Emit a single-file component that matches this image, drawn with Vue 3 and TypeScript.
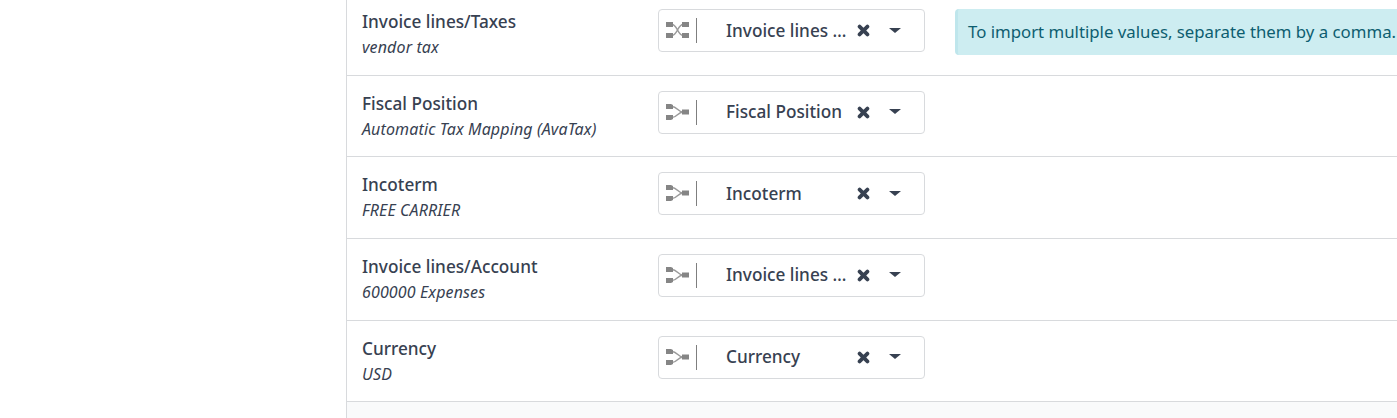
<script setup lang="ts">
type Row = {
  name: string;
  sample: string;
  field: string;
  hint?: string;
  icon: "many" | "one";
};

const rows: Row[] = [
  {
    name: "Invoice lines/Taxes",
    sample: "vendor tax",
    field: "Invoice lines / Taxes",
    icon: "many",
    hint: "To import multiple values, separate them by a comma.",
  },
  { name: "Fiscal Position", sample: "Automatic Tax Mapping (AvaTax)", field: "Fiscal Position", icon: "one" },
  { name: "Incoterm", sample: "FREE CARRIER", field: "Incoterm", icon: "one" },
  { name: "Invoice lines/Account", sample: "600000 Expenses", field: "Invoice lines / Account", icon: "one" },
  { name: "Currency", sample: "USD", field: "Currency", icon: "one" },
];
</script>

<template>
  <div class="page">
    <div class="sidebar" />
    <div class="content">
      <div class="rows">
        <div v-for="row in rows" :key="row.name" class="row">
          <div class="label">
            <div class="name">{{ row.name }}</div>
            <div class="sample">{{ row.sample }}</div>
          </div>
          <div class="select">
            <svg class="rel" width="23" height="16" viewBox="0 0 23 16">
              <g v-if="row.icon === 'many'">
                <path d="M6 2.5 C11 2.5 12 13.5 17 13.5 M6 13.5 C11 13.5 12 2.5 17 2.5" fill="none" stroke="#9a9a9a" stroke-width="1.5" />
                <rect x="0" y="0" width="7" height="5" fill="#858585" />
                <rect x="0" y="11" width="7" height="5" fill="#858585" />
                <rect x="16" y="0" width="7" height="5" fill="#858585" />
                <rect x="16" y="11" width="7" height="5" fill="#858585" />
              </g>
              <g v-else>
                <path d="M6 2.5 C11 2.5 12 8 17 8 M6 13.5 C11 13.5 12 8 17 8" fill="none" stroke="#9a9a9a" stroke-width="1.5" />
                <path d="M0 0 H5 L7 1 V5 H0 Z" fill="#858585" />
                <path d="M0 11 H7 V15 L5 16 H0 Z" fill="#858585" />
                <rect x="16" y="5.5" width="7" height="5" fill="#858585" />
              </g>
            </svg>
            <span class="sep" />
            <span class="value">{{ row.field }}</span>
            <svg class="clear" width="13" height="13" viewBox="0 0 13 13">
              <path d="M2.6 2.6 L10.4 10.4 M10.4 2.6 L2.6 10.4" stroke="#374151" stroke-width="3.8" stroke-linecap="round" />
            </svg>
            <span class="caret" />
          </div>
          <div v-if="row.hint" class="hint">{{ row.hint }}</div>
        </div>
      </div>
    </div>
  </div>
</template>

<style>
html,
body {
  margin: 0;
  background: #fff;
  overflow: hidden;
}
</style>

<style scoped>
.page {
  display: flex;
  height: 418px;
  overflow: hidden;
  font-family: "Noto Sans", sans-serif;
  color: #374151;
}
.sidebar {
  width: 346px;
  flex: none;
  background: #fff;
}
.content {
  flex: 1;
  min-width: 0;
  border-left: 1px solid #d8dadd;
  background: #f9fafb;
  overflow: hidden;
}
.rows {
  margin-top: -6px;
  background: #fff;
}
.row {
  box-sizing: border-box;
  height: 81.67px;
  padding: 15px 0 0 15px;
  border-bottom: 1px solid #d8dadd;
  display: flex;
  align-items: flex-start;
}
.label {
  width: 296px;
  flex: none;
}
.name {
  font-size: 17.2px;
  line-height: 26px;
  font-weight: 500;
}
.sample {
  font-size: 16px;
  letter-spacing: 0.13px;
  line-height: 24px;
  font-style: italic;
}
.select {
  box-sizing: border-box;
  width: 267px;
  height: 43px;
  flex: none;
  display: flex;
  align-items: center;
  border: 1px solid #d8dadd;
  border-radius: 4px;
  padding-left: 7px;
}
.rel {
  flex: none;
  margin-bottom: 1px;
}
.sep {
  width: 1px;
  height: 25px;
  margin: 0 29px 0 7px;
  background: #7f7f7f;
  flex: none;
}
.value {
  width: 122px;
  flex: none;
  font-size: 17.2px;
  font-weight: 500;
  line-height: 24px;
  white-space: nowrap;
  overflow: hidden;
  text-overflow: ellipsis;
}
.clear {
  flex: none;
  margin-left: 9px;
}
.caret {
  flex: none;
  margin-left: 19px;
  margin-bottom: 1px;
  border-left: 6px solid transparent;
  border-right: 6px solid transparent;
  border-top: 5px solid #374151;
}
.hint {
  box-sizing: border-box;
  flex: none;
  margin-left: 30px;
  height: 46px;
  padding: 0 12px 0 10px;
  line-height: 46px;
  font-size: 16.8px;
  white-space: nowrap;
  background: #cdedf1;
  color: #0d5e70;
  border-left: 3px solid #bfe6ec;
  border-radius: 4px 0 0 4px;
}
</style>
